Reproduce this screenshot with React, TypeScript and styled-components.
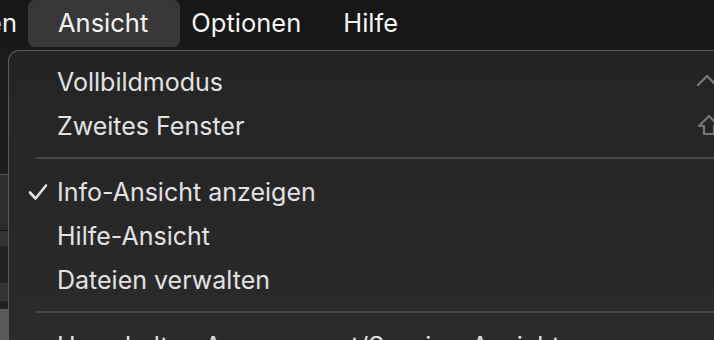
import React from "react";
import styled, { createGlobalStyle } from "styled-components";

const Global = createGlobalStyle`
  html, body {
    margin: 0;
    padding: 0;
    background: #1a1a1a;
    overflow: hidden;
  }
  body {
    font-family: Inter, "Noto Sans", "Liberation Sans", sans-serif;
    -webkit-font-smoothing: antialiased;
  }
`;

const Screen = styled.div`
  width: 714px;
  height: 340px;
  overflow: hidden;
  display: flex;
  flex-direction: column;
  background: #1a1a1a;
`;

const MenuBar = styled.div`
  height: 47px;
  flex: none;
  display: flex;
  align-items: stretch;
  background: #171717;
`;

// items left of "Ansicht", scrolled off the left edge
const Leading = styled.div`
  width: 38px;
  flex: none;
  display: flex;
  justify-content: flex-end;
  overflow: hidden;
`;

const BarItem = styled.div<{ $active?: boolean }>`
  display: flex;
  align-items: center;
  flex: none;
  white-space: nowrap;
  padding: 0 ${(p) => (p.$active ? "32px 3px 30px" : "21px 3px")};
  margin: 0 ${(p) => (p.$active ? "-10px" : "0")};
  border-radius: 7px;
  font-size: 25.5px;
  color: #f4f4f4;
  background: ${(p) => (p.$active ? "#383838" : "transparent")};
`;

const Body = styled.div`
  flex: 1;
  display: flex;
  min-height: 0;
  padding-top: 3px;
`;

const Backdrop = styled.div`
  width: 8px;
  flex: none;
  display: flex;
  flex-direction: column;
  margin-top: -3px;
`;

const Strip = styled.div<{ $h: number; $c: string; $line?: string }>`
  height: ${(p) => p.$h}px;
  flex: none;
  background: ${(p) => p.$c};
  border-top: ${(p) => (p.$line ? `1px solid ${p.$line}` : "none")};
`;

const Menu = styled.div`
  width: 760px;
  flex: none;
  border: 1px solid #5a5a5a;
  border-right: none;
  border-bottom: none;
  border-radius: 11px 0 0 0;
  background: linear-gradient(180deg, #242424 0%, #272727 50%, #2b2b2b 100%);
  padding: 9px 0 0 0;
  display: flex;
  flex-direction: column;
`;

const Item = styled.div`
  height: 44px;
  flex: none;
  display: flex;
  align-items: center;
  padding-left: 19px;
  font-size: 25px;
  color: #e2e2e2;
`;

const Check = styled.span`
  width: 29px;
  flex: none;
  display: flex;
  align-items: center;
`;

const Label = styled.span`
  flex: 1;
  white-space: nowrap;
`;

const Shortcut = styled.span`
  width: 73px;
  flex: none;
  display: flex;
  align-items: center;
  color: #777;
`;

const Separator = styled.div`
  height: 2px;
  flex: none;
  margin: 9px 0 11px 27px;
  background: #474747;
`;

const CheckIcon = () => (
  <svg width="20" height="18" viewBox="0 0 20 18">
    <path
      d="M2 9.5 L7.5 15.5 L18 2.5"
      fill="none"
      stroke="#e2e2e2"
      strokeWidth="2.6"
      strokeLinecap="round"
      strokeLinejoin="round"
    />
  </svg>
);

const CaretIcon = () => (
  <svg width="24" height="14" viewBox="0 0 24 14" style={{ marginTop: -5 }}>
    <path
      d="M2 12 L11 3 L20 12"
      fill="none"
      stroke="#787878"
      strokeWidth="2.4"
      strokeLinecap="round"
      strokeLinejoin="round"
    />
  </svg>
);

const ShiftIcon = () => (
  <svg width="26" height="22" viewBox="0 0 26 22" style={{ marginTop: -2 }}>
    <path
      d="M13 2 L23 12 L18 12 L18 20 L8 20 L8 12 L3 12 Z"
      fill="none"
      stroke="#787878"
      strokeWidth="2.2"
      strokeLinejoin="round"
    />
  </svg>
);

type Entry =
  | { kind: "item"; label: string; checked?: boolean; icon?: React.ReactNode }
  | { kind: "sep" };

const entries: Entry[] = [
  { kind: "item", label: "Vollbildmodus", icon: <CaretIcon /> },
  { kind: "item", label: "Zweites Fenster", icon: <ShiftIcon /> },
  { kind: "sep" },
  { kind: "item", label: "Info-Ansicht anzeigen", checked: true },
  { kind: "item", label: "Hilfe-Ansicht" },
  { kind: "item", label: "Dateien verwalten" },
  { kind: "sep" },
  { kind: "item", label: "Umschalten Arrangement/Session-Ansicht" },
];

export default function App() {
  return (
    <>
      <Global />
      <Screen>
        <MenuBar>
          <Leading>
            <BarItem>Erzeugen</BarItem>
          </Leading>
          <BarItem $active>Ansicht</BarItem>
          <BarItem>Optionen</BarItem>
          <BarItem>Hilfe</BarItem>
        </MenuBar>
        <Body>
          <Backdrop>
            <Strip $h={127} $c="#1c1c1c" />
            <Strip $h={55} $c="#2c2c2c" $line="#555" />
            <Strip $h={15} $c="#343434" $line="#111" />
            <Strip $h={37} $c="#222" />
            <Strip $h={18} $c="#333" />
            <Strip $h={8} $c="#222" />
            <Strip $h={40} $c="#5a5a5a" />
          </Backdrop>
          <Menu>
            {entries.map((e, i) =>
              e.kind === "sep" ? (
                <Separator key={i} />
              ) : (
                <Item key={i}>
                  <Check>{e.checked && <CheckIcon />}</Check>
                  <Label>{e.label}</Label>
                  <Shortcut>{e.icon}</Shortcut>
                </Item>
              )
            )}
          </Menu>
        </Body>
      </Screen>
    </>
  );
}
